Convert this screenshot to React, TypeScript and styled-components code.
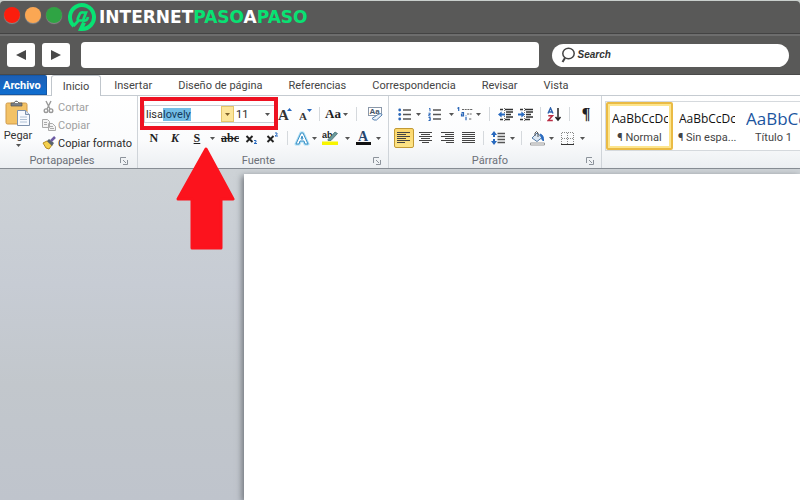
import React, { useEffect, useRef } from "react";
import styled, { createGlobalStyle } from "styled-components";

const Global = createGlobalStyle`
  * { box-sizing: border-box; }
  body { margin: 0; background: #c9cfcc; font-family: Roboto, "Noto Sans", sans-serif; font-size: 11px; color: #2b2b2b; }
  button, input, select { font: inherit; color: inherit; border: 0; padding: 0; margin: 0; background: none; }
`;

const Shell = styled.div`
  min-height: 100vh;
  display: flex;
  flex-direction: column;
  padding-top: 1px;
  overflow: hidden;
`;

/* browser frame */
const TitleBar = styled.header`
  display: flex;
  align-items: center;
  height: 33px;
  padding: 0 4px;
  background: #595958;
  border-bottom: 1px solid #434343;
  border-radius: 4px 4px 0 0;
`;
const Lights = styled.div`
  display: flex;
  gap: 5px;
  padding-bottom: 5px;
`;
const Light = styled.button<{ $color: string }>`
  width: 16px;
  height: 16px;
  border-radius: 50%;
  background: ${(p) => p.$color};
  box-shadow: 0 1px 1px #8b8b8b;
`;
const Brand = styled.a`
  display: flex;
  align-items: center;
  gap: 2px;
  margin-left: 5px;
  font: bold 17px/20px "DejaVu Sans", sans-serif;
  color: #fff;
  text-decoration: none;
`;
const Green = styled.span`
  color: #08e273;
`;
const NavBar = styled.nav`
  display: flex;
  align-items: center;
  height: 41px;
  padding: 0 11px 0 7px;
  background: #595958;
  border-top: 2px solid #6d6d6d;
  border-bottom: 1px solid #494949;
`;
const NavButton = styled.button`
  display: grid;
  place-items: center;
  width: 28px;
  height: 24px;
  margin-right: 7px;
  border-radius: 3px;
  background: #fff;
`;
const Address = styled.input`
  flex: 459 1 0;
  min-width: 0;
  height: 26px;
  margin: 0 13px 0 4px;
  padding: 0 8px;
  border-radius: 4px;
  background: #fff;
`;
const Search = styled.label`
  flex: 236 1 0;
  min-width: 0;
  display: flex;
  align-items: center;
  height: 23px;
  padding-left: 9px;
  border-radius: 12px;
  background: #fff;
`;
const SearchInput = styled.input`
  flex: 1;
  min-width: 0;
  margin-left: 2px;
  outline: 0;
  font: italic bold 10px/16px "Liberation Sans", sans-serif;
  &::placeholder { color: #333; opacity: 1; }
`;

/* ribbon */
const Tabs = styled.div`
  display: flex;
  height: 21px;
  background: #fff;
  border-bottom: 1px solid #c5cbd1;
`;
const Tab = styled.button<{ $kind?: "file" | "active" }>`
  height: ${(p) => (p.$kind === "active" ? 21 : 20)}px;
  padding: 0 13px;
  white-space: nowrap;
  color: #444;
  ${(p) =>
    p.$kind === "file" &&
    `padding: 0 5px 0 3px; margin-right: 4px; color: #fff; font-weight: 700;
     background: linear-gradient(#1d5fb5, #0f6ed0); border: 1px solid #1557a5; border-left: 0; border-radius: 0 2px 0 0;`}
  ${(p) =>
    p.$kind === "active" &&
    `padding: 0 11px; background: #fff; border: 1px solid #c0c6cc; border-bottom: 0; border-radius: 3px 3px 0 0;`}
`;
const Ribbon = styled.div`
  display: flex;
  height: 73px;
  background: linear-gradient(#fff, #fbfcfd 60%, #eceff2);
  border-bottom: 1px solid #878d94;
`;
const Group = styled.section<{ $pad: string }>`
  position: relative;
  flex: none;
  display: flex;
  flex-direction: column;
  justify-content: space-between;
  padding: ${(p) => p.$pad};
  border-right: 1px solid #cfd4d9;
`;
const Caption = styled.div`
  display: flex;
  align-items: center;
  height: 15px;
  color: #6c7078;
`;
const CaptionText = styled.span`
  flex: 1;
  text-align: center;
`;
const Launcher = styled.button`
  display: grid;
  width: 12px;
`;
const Row = styled.div`
  display: flex;
  align-items: center;
  height: 24px;
`;
const Tool = styled.button<{ $w: number; $on?: boolean }>`
  display: grid;
  place-items: center;
  flex: none;
  width: ${(p) => p.$w}px;
  height: 20px;
  ${(p) => p.$on && `background: linear-gradient(#fbd66b, #fde487); border: 1px solid #c29a35; border-radius: 2px;`}
`;
const Glyph = styled.span<{ $size?: number; $italic?: boolean; $line?: string }>`
  font: ${(p) => (p.$italic ? "italic" : "normal")} bold ${(p) => p.$size ?? 12}px/16px "Liberation Serif", serif;
  text-decoration: ${(p) => p.$line ?? "none"};
  color: #1f1f1f;
`;
const Split = styled.i<{ $w: number }>`
  flex: none;
  width: ${(p) => p.$w}px;
  height: 14px;
  background: linear-gradient(#d5d9dd, #d5d9dd) center / 1px 100% no-repeat;
`;
const Clipboard = styled.div`
  display: flex;
  gap: 10px;
`;
const Paste = styled.button`
  display: flex;
  flex-direction: column;
  align-items: center;
  gap: 1px;
  padding-top: 2px;
  line-height: 15px;
  width: 28px;
  color: #333;
`;
const Commands = styled.div`
  display: flex;
  flex-direction: column;
`;
const Command = styled.button`
  display: flex;
  align-items: center;
  gap: 2px;
  height: 18px;
  white-space: nowrap;
  &:disabled { color: #a0a0a0; }
`;
const FontBox = styled.div`
  display: flex;
  width: 131px;
  height: 18px;
  background: #fff;
  border: 1px solid #c9ced6;
`;
const FontName = styled.input`
  flex: 1;
  min-width: 0;
  padding-left: 1px;
  outline: 0;
  &::selection { background: #73bde6; color: #143a5c; }
`;
const FontDrop = styled.button`
  display: grid;
  place-items: center;
  width: 13px;
  background: #fde69b;
  border: 1px solid #e6c66a;
`;
const SizeBox = styled.label`
  display: flex;
  align-items: center;
  width: 40px;
  padding: 0 4px 0 2px;
`;
const SizeSelect = styled.select`
  flex: 1;
  min-width: 0;
  appearance: none;
  outline: 0;
`;
const Highlight = styled.div`
  position: absolute;
  top: 1px;
  left: 2px;
  width: 138px;
  height: 33px;
  border: 4px solid #ee1222;
  pointer-events: none;
`;
const Pointer = styled.svg`
  position: absolute;
  z-index: 2;
  top: 51px;
  left: 38px;
  pointer-events: none;
`;
const Styles = styled.section`
  flex: 1;
  min-width: 0;
  padding: 5px 0 0 3px;
`;
const Gallery = styled.div`
  display: flex;
  height: 50px;
  overflow: hidden;
  background: #fff;
  border: 1px solid #d5d9dd;
  border-right: 0;
`;
const Card = styled.button<{ $on?: boolean }>`
  flex: none;
  width: 67px;
  height: 48px;
  padding: 4px 3px 0;
  border: 2px solid ${(p) => (p.$on ? "#eabb45" : "transparent")};
  border-radius: 2px;
  box-shadow: ${(p) => (p.$on ? "inset 0 0 0 2px #fde58d" : "none")};
  white-space: nowrap;
`;
const Preview = styled.span<{ $big?: boolean }>`
  display: block;
  overflow: hidden;
  text-align: left;
  margin-left: 1px;
  font: ${(p) => (p.$big ? 17 : 12)}px/20px "Open Sans", sans-serif;
  color: ${(p) => (p.$big ? "#1b55a0" : "#111")};
`;
const CardName = styled.span`
  display: block;
  line-height: 18px;
  color: #444;
`;

/* document */
const Desk = styled.main`
  flex: 1;
  display: flex;
  padding: 5px 0 0 30.5%;
  background: linear-gradient(#cdd2d6, #c7ccd4 35%, #c2c7cc 65%, #bfc4cc);
`;
const Sheet = styled.article`
  flex: 1;
  background: #fff;
  box-shadow: -2px 2px 6px #70757b;
`;

const Down = ({ color = "#555" }: { color?: string }) => (
  <svg width="5" height="3" viewBox="0 0 5 3"><path d="M0 0h5L2.5 3z" fill={color} /></svg>
);
const Drop = ({ w, name }: { w: number; name: string }) => (
  <Tool $w={w} aria-label={name}><Down /></Tool>
);

const lineSets = {
  left: [[1, 14], [1, 10], [1, 14], [1, 10], [1, 14], [1, 9]],
  center: [[1, 14], [3, 12], [1, 14], [3, 12], [1, 14], [4, 11]],
  right: [[1, 14], [5, 14], [1, 14], [5, 14], [1, 14], [6, 14]],
  full: [[1, 14], [1, 14], [1, 14], [1, 14], [1, 14], [1, 14]],
};
const Align = ({ kind }: { kind: keyof typeof lineSets }) => (
  <svg width="15" height="12" viewBox="0 0 15 12" stroke="#444">
    {lineSets[kind].map(([a, b], i) => <path key={i} d={`M${a} ${i * 2 + 0.5}H${b}`} />)}
  </svg>
);
const Bullets = ({ numbered }: { numbered?: boolean }) => (
  <svg width="14" height="13" viewBox="0 0 14 13">
    <path d="M5 2h8M5 6.5h8M5 11h8" stroke="#555" strokeWidth="1.3" />
    {numbered ? (
      <path d="M1 1l1-.7v3M.5 5.2h1.7v1.3H.8V8h1.7M.5 9.5h1.8v3H.5M1 11h1" fill="none" stroke="#2b67b8" />
    ) : (
      <g fill="#2b67b8"><circle cx="1.7" cy="2" r="1.4" /><circle cx="1.7" cy="6.5" r="1.4" /><circle cx="1.7" cy="11" r="1.4" /></g>
    )}
  </svg>
);
const Multilevel = () => (
  <svg width="17" height="14" viewBox="0 0 17 14" fill="none">
    <path d="M5 2.5h11M10 7h5M12 12h3" stroke="#666" strokeDasharray="2 .7" strokeWidth="1.2" />
    <path d="M.5 1.5l1.2-1V4M4.5 5.5h2v3.3h-2V7h2M9 10v3.3M9 8.5v.7" stroke="#2b67b8" strokeWidth="1.2" />
  </svg>
);
const Indent = ({ out }: { out?: boolean }) => (
  <svg width="16" height="13" viewBox="0 0 16 13">
    <path d="M2 1.5h3M7 1.5h8M8 4h7M8 6.5h5M8 9h7M2 11.5h3M7 11.5h5" stroke="#333" strokeWidth="1.4" />
    <path d="M6.5 0v13" stroke="#777" strokeDasharray="1 1" />
    <path d={out ? "M0 6.5l3.6-3v2H7v2H3.6v2z" : "M7 6.5l-3.6-3v2H0v2h3.4v2z"} fill="#2769bf" />
  </svg>
);
const Sort = () => (
  <svg width="15" height="15" viewBox="0 0 15 15" fill="none">
    <path d="M1 6.5L3.5 1 6 6.5M2 5h3" stroke="#2d62ad" strokeWidth="1.4" />
    <path d="M1.3 8.7h4.2L1.2 13.5h4.6" stroke="#b92c43" strokeWidth="1.5" />
    <path d="M11 1v11M8.5 10l2.5 3 2.5-3" stroke="#222" strokeWidth="1.5" />
  </svg>
);
const Spacing = () => (
  <svg width="15" height="14" viewBox="0 0 15 14">
    <path d="M6.5 2.5H14M6.5 5.5H14M6.5 8.5H14M6.5 11.5H14" stroke="#555" strokeWidth="1.3" />
    <path d="M3 0l3 4H4v2H2V4H0zM3 14l3-4H4V8H2v2H0z" fill="#2769bf" />
  </svg>
);
const Bucket = () => (
  <svg width="17" height="15" viewBox="0 0 17 15">
    <path d="M3 7l5-5 5 4.5-5 4z" fill="#dbe7f3" stroke="#547ba7" />
    <path d="M6 5V2q1.5-3 3 0v4" fill="none" stroke="#555" />
    <path d="M11 3q4 1 3.5 7-2-1-2-4z" fill="#2769bf" stroke="#2769bf" />
    <path d="M1.5 12h14v2h-14z" fill="#fff" stroke="#9a9a9a" />
  </svg>
);
const Borders = () => (
  <svg width="13" height="13" viewBox="0 0 13 13" fill="none" stroke="#888">
    <path d="M.5 12V.5h12V12M6.5 1v11M1 6.5h11" strokeDasharray="1 1" />
    <path d="M0 12.5h13" stroke="#333" />
  </svg>
);
const Grow = ({ down }: { down?: boolean }) => (
  <svg width="14" height="16" viewBox="0 0 14 16">
    <text x="0" y="14" fontFamily="Liberation Serif, serif" fontWeight="bold" fontSize={down ? 11 : 15} fill="#333">A</text>
    <path d={down ? "M8 3h5l-2.5 3z" : "M9 5h5l-2.5-3z"} fill="#2769bf" />
  </svg>
);
const ClearFormat = () => (
  <svg width="16" height="16" viewBox="0 0 16 16">
    <rect x="1.5" y="1.5" width="13" height="8" fill="#fff" stroke="#8a97a8" />
    <text x="2.5" y="8" fontFamily="Liberation Sans, sans-serif" fontWeight="bold" fontSize="8" fill="#44546a">Aa</text>
    <path d="M5 12.5l6-4q4-2 4 .5L9.5 14H7z" fill="#edf4fb" stroke="#5781b0" />
  </svg>
);
const Effects = () => (
  <svg width="16" height="15" viewBox="0 0 16 15" fill="none" strokeLinejoin="round">
    <path d="M2 13L7 2h2l5 11h-3l-1-3H6l-1 3z" stroke="#a8dcf4" strokeWidth="3" />
    <path d="M2 13L7 2h2l5 11h-3l-1-3H6l-1 3zM7 8l1-3 1 3z" stroke="#3c91c6" fill="#fff" />
  </svg>
);
const Marker = () => (
  <svg width="17" height="16" viewBox="0 0 17 16">
    <text x="0" y="8" fontFamily="Liberation Sans, sans-serif" fontWeight="bold" fontSize="9" fill="#222">ab</text>
    <path d="M6 9.5L13 2l2.5 1.5L9 10.5H6z" fill="#6a9a9c" stroke="#3d6668" strokeWidth=".7" />
    <path d="M0 11.5h16v3.5H0z" fill="#f8f500" />
  </svg>
);
const FontColor = () => (
  <svg width="15" height="16" viewBox="0 0 15 16">
    <text x="2" y="11" fontFamily="Liberation Serif, serif" fontWeight="bold" fontSize="14" fill="#27466f">A</text>
    <path d="M0 12h15v3H0z" fill="#111" />
  </svg>
);
const Script = ({ up }: { up?: boolean }) => (
  <svg width="13" height="14" viewBox="0 0 13 14">
    <path d="M1.5 5l6 6M7.5 5l-6 6" stroke="#222" strokeWidth="1.9" />
    <path d={up ? "M9 2h2v1.5L9 5h3" : "M9 9.5h2V11l-2 1.5h3"} fill="none" stroke="#2769bf" />
  </svg>
);
const LaunchIcon = () => (
  <svg width="8" height="8" viewBox="0 0 8 8" fill="none" stroke="#8c939b">
    <path d="M.5 6V.5H6M3 3l3 3M7.5 3v4.5H3" />
  </svg>
);
const PasteIcon = () => (
  <svg width="26" height="27" viewBox="0 0 26 27">
    <rect x="1" y="3" width="21" height="21" rx="1.5" fill="#f3c266" stroke="#cf9a4a" />
    <path d="M6 6V3h3q2-4 5 0h3v3z" fill="#7b8087" stroke="#555" strokeWidth=".7" />
    <path d="M10 2.5h3" stroke="#fff" />
    <path d="M12.5 10.5h8l4 4v11h-12z" fill="#f7faff" stroke="#7d91ad" />
    <path d="M20.5 10.5v4h4" fill="#d5e0ef" stroke="#7d91ad" />
    <path d="M15 17h7M15 19.5h7M15 22h7" stroke="#afc0d4" />
  </svg>
);
const Cut = () => (
  <svg width="14" height="14" viewBox="0 0 14 14" fill="none" stroke="#999" strokeWidth="1.4">
    <path d="M4 1l4 8M9 1L5 9" /><circle cx="4" cy="10.7" r="1.8" /><circle cx="9" cy="10.7" r="1.8" />
  </svg>
);
const Copy = () => (
  <svg width="14" height="14" viewBox="0 0 14 14" fill="#f4f4f4" stroke="#aaa">
    <path d="M.5 1.5h5l2 2v6h-7zM6.5 5.5h4l3 3v4h-7z" /><path d="M2 4.5h3M2 6.5h3M8 8.5h3M8 10.5h4" />
  </svg>
);
const Brush = () => (
  <svg width="14" height="14" viewBox="0 0 14 14">
    <path d="M1 7l4-2 5 4-3 4-3-1z" fill="#f5d14d" stroke="#b68c23" />
    <path d="M5 5l2-2 5 4-2 3z" fill="#59636e" /><path d="M9 5l4-4" stroke="#6c5aa3" strokeWidth="2.5" />
  </svg>
);
const Logo = () => (
  <svg width="30" height="30" viewBox="0 0 30 30" fill="none" stroke="#08e273">
    <path d="M7 24A12 12 0 1 1 14 27L17 20.500" strokeWidth="4" />
    <path d="M19 10.500L16 18.500H12Q10 18.500 11 16L12.500 12.500Q13.500 10 16 10.500ZM16 18.500Q20 19.500 21 15M11.500 18.500L6.500 24" strokeWidth="2.700" />
  </svg>
);

const tabs = ["Insertar", "Diseño de página", "Referencias", "Correspondencia", "Revisar", "Vista"];

export default function App() {
  const fontName = useRef<HTMLInputElement>(null);
  useEffect(() => {
    fontName.current?.focus();
    fontName.current?.setSelectionRange(4, 10);
  }, []);

  return (
    <Shell>
      <Global />
      <TitleBar>
        <Lights>
          <Light $color="#fb1d0d" aria-label="Cerrar" />
          <Light $color="#fba753" aria-label="Minimizar" />
          <Light $color="#2fa444" aria-label="Maximizar" />
        </Lights>
        <Brand href="#">
          <Logo />
          <span>INTERNET<Green>PASO</Green>A<Green>PASO</Green></span>
        </Brand>
      </TitleBar>
      <NavBar>
        <NavButton aria-label="Atrás"><svg width="10" height="10"><path d="M0 5l10-5v10z" fill="#484848" /></svg></NavButton>
        <NavButton aria-label="Adelante"><svg width="10" height="10"><path d="M10 5L0 0v10z" fill="#484848" /></svg></NavButton>
        <Address aria-label="Dirección" />
        <Search>
          <svg width="14" height="16" viewBox="0 0 14 16" fill="none" stroke="#444" strokeWidth="1.5">
            <ellipse cx="7.5" cy="6.5" rx="5.7" ry="5.3" /><path d="M4 11l-2.5 4" strokeWidth="2" />
          </svg>
          <SearchInput placeholder="Search" aria-label="Search" />
        </Search>
      </NavBar>

      <Tabs>
        <Tab $kind="file">Archivo</Tab>
        <Tab $kind="active">Inicio</Tab>
        {tabs.map((t) => <Tab key={t}>{t}</Tab>)}
      </Tabs>
      <Ribbon>
        <Group $pad="2px 5px 0 4px">
          <Clipboard>
            <Paste><PasteIcon /><span>Pegar</span><Down /></Paste>
            <Commands>
              <Command disabled><Cut />Cortar</Command>
              <Command disabled><Copy />Copiar</Command>
              <Command><Brush />Copiar formato</Command>
            </Commands>
          </Clipboard>
          <Caption><CaptionText>Portapapeles</CaptionText><Launcher aria-label="Opciones de portapapeles"><LaunchIcon /></Launcher></Caption>
        </Group>

        <Group $pad="6px 3px 0 6px">
          <div>
            <Row>
              <FontBox>
                <FontName ref={fontName} defaultValue="lisalovely" aria-label="Fuente" spellCheck={false} />
                <FontDrop aria-label="Elegir fuente"><Down color="#80632a" /></FontDrop>
                <SizeBox>
                  <SizeSelect defaultValue="11" aria-label="Tamaño de fuente"><option>11</option><option>12</option></SizeSelect>
                  <Down />
                </SizeBox>
              </FontBox>
              <Tool $w={20} aria-label="Agrandar fuente"><Grow /></Tool>
              <Tool $w={22} aria-label="Reducir fuente"><Grow down /></Tool>
              <Split $w={6} />
              <Tool $w={20} aria-label="Mayúsculas"><Glyph $size={13}>Aa</Glyph></Tool>
              <Drop w={6} name="Opciones de mayúsculas" />
              <Split $w={16} />
              <Tool $w={20} aria-label="Borrar formato"><ClearFormat /></Tool>
            </Row>
            <Row>
              <Tool $w={20}><Glyph>N</Glyph></Tool>
              <Tool $w={22}><Glyph $italic>K</Glyph></Tool>
              <Tool $w={22}><Glyph $line="underline">S</Glyph></Tool>
              <Drop w={10} name="Tipo de subrayado" />
              <Tool $w={24}><Glyph $line="line-through">abc</Glyph></Tool>
              <Tool $w={20} aria-label="Subíndice"><Script /></Tool>
              <Tool $w={22} aria-label="Superíndice"><Script up /></Tool>
              <Split $w={8} />
              <Tool $w={20} aria-label="Efectos de texto"><Effects /></Tool>
              <Drop w={6} name="Opciones de efectos" />
              <Tool $w={26} aria-label="Resaltado"><Marker /></Tool>
              <Drop w={8} name="Color de resaltado" />
              <Tool $w={24} aria-label="Color de fuente"><FontColor /></Tool>
              <Drop w={6} name="Opciones de color" />
            </Row>
          </div>
          <Caption><CaptionText>Fuente</CaptionText><Launcher aria-label="Opciones de fuente"><LaunchIcon /></Launcher></Caption>
          <Highlight />
          <Pointer width="60" height="103" viewBox="0 0 60 103">
            <path d="M30 2L57 52H45V101H16V52H2z" fill="#fc131d" stroke="#fc131d" strokeWidth="3" strokeLinejoin="round" />
          </Pointer>
        </Group>

        <Group $pad="6px 3px 0 5px">
          <div>
            <Row>
              <Tool $w={22} aria-label="Viñetas"><Bullets /></Tool>
              <Drop w={6} name="Opciones de viñetas" />
              <Tool $w={26} aria-label="Numeración"><Bullets numbered /></Tool>
              <Drop w={8} name="Opciones de numeración" />
              <Tool $w={20} aria-label="Lista multinivel"><Multilevel /></Tool>
              <Drop w={6} name="Opciones multinivel" />
              <Split $w={16} />
              <Tool $w={16} aria-label="Disminuir sangría"><Indent out /></Tool>
              <Tool $w={24} aria-label="Aumentar sangría"><Indent /></Tool>
              <Split $w={6} />
              <Tool $w={22} aria-label="Ordenar"><Sort /></Tool>
              <Split $w={8} />
              <Tool $w={24}><Glyph $size={16}>¶</Glyph></Tool>
            </Row>
            <Row>
              <Tool $w={20} $on aria-label="Alinear a la izquierda"><Align kind="left" /></Tool>
              <Tool $w={24} aria-label="Centrar"><Align kind="center" /></Tool>
              <Tool $w={20} aria-label="Alinear a la derecha"><Align kind="right" /></Tool>
              <Tool $w={22} aria-label="Justificar"><Align kind="full" /></Tool>
              <Split $w={8} />
              <Tool $w={22} aria-label="Interlineado"><Spacing /></Tool>
              <Drop w={6} name="Opciones de interlineado" />
              <Split $w={12} />
              <Tool $w={20} aria-label="Sombreado"><Bucket /></Tool>
              <Drop w={8} name="Color de sombreado" />
              <Tool $w={24} aria-label="Bordes"><Borders /></Tool>
              <Drop w={6} name="Opciones de bordes" />
            </Row>
          </div>
          <Caption><CaptionText>Párrafo</CaptionText><Launcher aria-label="Opciones de párrafo"><LaunchIcon /></Launcher></Caption>
        </Group>

        <Styles>
          <Gallery>
            <Card $on><Preview>AaBbCcDc</Preview><CardName>¶ Normal</CardName></Card>
            <Card><Preview>AaBbCcDc</Preview><CardName>¶ Sin espa...</CardName></Card>
            <Card><Preview $big>AaBbCc</Preview><CardName>Título 1</CardName></Card>
          </Gallery>
        </Styles>
      </Ribbon>

      <Desk><Sheet aria-label="Documento" /></Desk>
    </Shell>
  );
}
